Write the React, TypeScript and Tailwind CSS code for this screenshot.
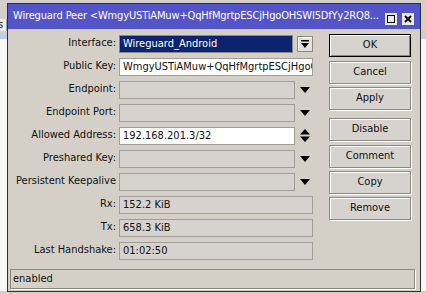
const font = "font-['DejaVu_Sans_Condensed','DejaVu_Sans',sans-serif]";

type Row = {
  label: string;
  kind: 'select' | 'text' | 'short' | 'disabled' | 'readonly';
  value?: string;
  arrow?: 'down' | 'updown';
};

const rows: Row[] = [
  { label: 'Interface:', kind: 'select', value: 'Wireguard_Android' },
  { label: 'Public Key:', kind: 'text', value: 'WmgyUSTiAMuw+QqHfMgrtpESCjHgoOHSWI5DfYy2RQ8=' },
  { label: 'Endpoint:', kind: 'disabled', arrow: 'down' },
  { label: 'Endpoint Port:', kind: 'disabled', arrow: 'down' },
  { label: 'Allowed Address:', kind: 'short', value: '192.168.201.3/32', arrow: 'updown' },
  { label: 'Preshared Key:', kind: 'disabled', arrow: 'down' },
  { label: 'Persistent Keepalive', kind: 'disabled', arrow: 'down' },
  { label: 'Rx:', kind: 'readonly', value: '152.2 KiB' },
  { label: 'Tx:', kind: 'readonly', value: '658.3 KiB' },
  { label: 'Last Handshake:', kind: 'readonly', value: '01:02:50' },
];

function Arrow({ type }: { type: 'down' | 'updown' }) {
  return (
    <div className="w-[18px] h-[18px] flex items-center justify-center pl-[2px]">
      {type === 'down' ? (
        <svg width="10" height="6" viewBox="0 0 10 6">
          <path d="M0 0h10L5 6z" fill="#000" />
        </svg>
      ) : (
        <svg width="10" height="13" viewBox="0 0 10 13">
          <path d="M5 0l5 5.5H0z" fill="#000" />
          <path d="M0 7.5h10L5 13z" fill="#000" />
        </svg>
      )}
    </div>
  );
}

function Field({ row }: { row: Row }) {
  if (row.kind === 'select') {
    return (
      <div className="flex items-center">
        <div className="w-[174px] h-[18px] border border-[#8c8982] bg-[#0c2470] text-white pl-[3px] leading-[16px] overflow-hidden whitespace-nowrap">
          {row.value}
        </div>
        <div className="ml-[4px] w-[16px] h-[16px] border border-[#8c8982] bg-[#e4e1dc] shadow-[inset_1px_1px_0_#fff] flex items-center justify-center">
          <svg width="8" height="8" viewBox="0 0 8 8">
            <path d="M0 0h8v1.5H0z" fill="#000" />
            <path d="M0 3h8L4 8z" fill="#000" />
          </svg>
        </div>
      </div>
    );
  }
  if (row.kind === 'text' || row.kind === 'readonly') {
    const bg = row.kind === 'text' ? 'bg-white' : 'bg-[#d6d3ce]';
    return (
      <div className={`w-[194px] h-[18px] border border-[#a19e97] ${bg} pl-[3px] leading-[16px] overflow-hidden whitespace-nowrap`}>
        {row.value}
      </div>
    );
  }
  const bg = row.kind === 'short' ? 'bg-white' : 'bg-[#d6d3ce]';
  return (
    <div className="flex items-center">
      <div className={`w-[176px] h-[18px] border border-[#a19e97] ${bg} pl-[3px] leading-[16px] overflow-hidden whitespace-nowrap`}>
        {row.value}
      </div>
      {row.arrow && <Arrow type={row.arrow} />}
    </div>
  );
}

function Button({ label, primary, className }: { label: string; primary?: boolean; className?: string }) {
  return (
    <div
      className={`w-[82px] h-[23px] flex items-center justify-center bg-[#d6d3ce] ${
        primary ? 'border border-black shadow-[inset_1px_1px_0_#fff,inset_-1px_-1px_0_#8c8982]' : 'border border-[#8c8982] shadow-[inset_1px_1px_0_#fff,1px_1px_0_#fff]'
      } ${className ?? ''}`}
    >
      {label}
    </div>
  );
}

export default function App() {
  return (
    <div className={`relative w-[426px] h-[294px] overflow-hidden bg-[#d4d0c8] text-[11px] text-[#111] ${font}`}>
      {/* window behind */}
      <div className="flex flex-col h-full">
        <div className="h-[19px] bg-[#d4d0c8]" />
        <div className="h-[12px] bg-[#ecebe8] border-r border-[#a0a0a0] w-[7px] leading-[12px] overflow-hidden -indent-[2px]">s</div>
        <div className="h-[2px]" />
        <div className="h-[6px] bg-[#b9d1ee]" />
        <div className="flex-1 bg-[#f7f7f7]" />
        <div className="h-[3px] bg-[#d4d0c8]" />
      </div>

      {/* dialog */}
      <div className="absolute left-[7px] top-[3px] w-[414px] h-[289px] border border-[#2e2e2e] bg-[#d4d0c8] flex flex-col">
        <div className="h-[25px] bg-[#5454c9] flex items-center pl-[5px] pr-[6px] text-white text-[11px]">
          <span className="flex-1 whitespace-nowrap overflow-hidden tracking-[-0.15px]">
            Wireguard Peer &lt;WmgyUSTiAMuw+QqHfMgrtpESCjHgoOHSWI5DfYy2RQ8...
          </span>
          <div className="flex gap-[5px] mt-[4px]">
            <div className="w-[12px] h-[12px] bg-[#e8e8e8] flex items-center justify-center">
              <div className="w-[8px] h-[8px] border border-black" />
            </div>
            <div className="w-[12px] h-[12px] bg-[#e8e8e8] flex items-center justify-center">
              <svg width="8" height="8" viewBox="0 0 8 8">
                <path d="M1 1l6 6M7 1L1 7" stroke="#000" strokeWidth="1.8" />
              </svg>
            </div>
          </div>
        </div>

        <div className="flex flex-1 pt-[3px]">
          <div className="w-[305px] flex flex-col">
            {rows.map((r) => (
              <div key={r.label} className="h-[23px] flex items-center">
                <div className="w-[108px] text-right whitespace-nowrap">{r.label}</div>
                <div className="ml-[3px]">
                  <Field row={r} />
                </div>
              </div>
            ))}
          </div>
          <div className="ml-[16px] flex flex-col pt-[2px]">
            <Button label="OK" primary />
            <Button label="Cancel" className="mt-[4px]" />
            <Button label="Apply" className="mt-[3px]" />
            <Button label="Disable" className="mt-[8px]" />
            <Button label="Comment" className="mt-[4px]" />
            <Button label="Copy" className="mt-[3px]" />
            <Button label="Remove" className="mt-[3px]" />
          </div>
        </div>

        <div className="mx-[2px] mr-[5px] mb-[2px] h-[20px] border border-[#8c8982] shadow-[1px_1px_0_#fff] flex items-center pl-[2px]">
          enabled
        </div>
      </div>
    </div>
  );
}
